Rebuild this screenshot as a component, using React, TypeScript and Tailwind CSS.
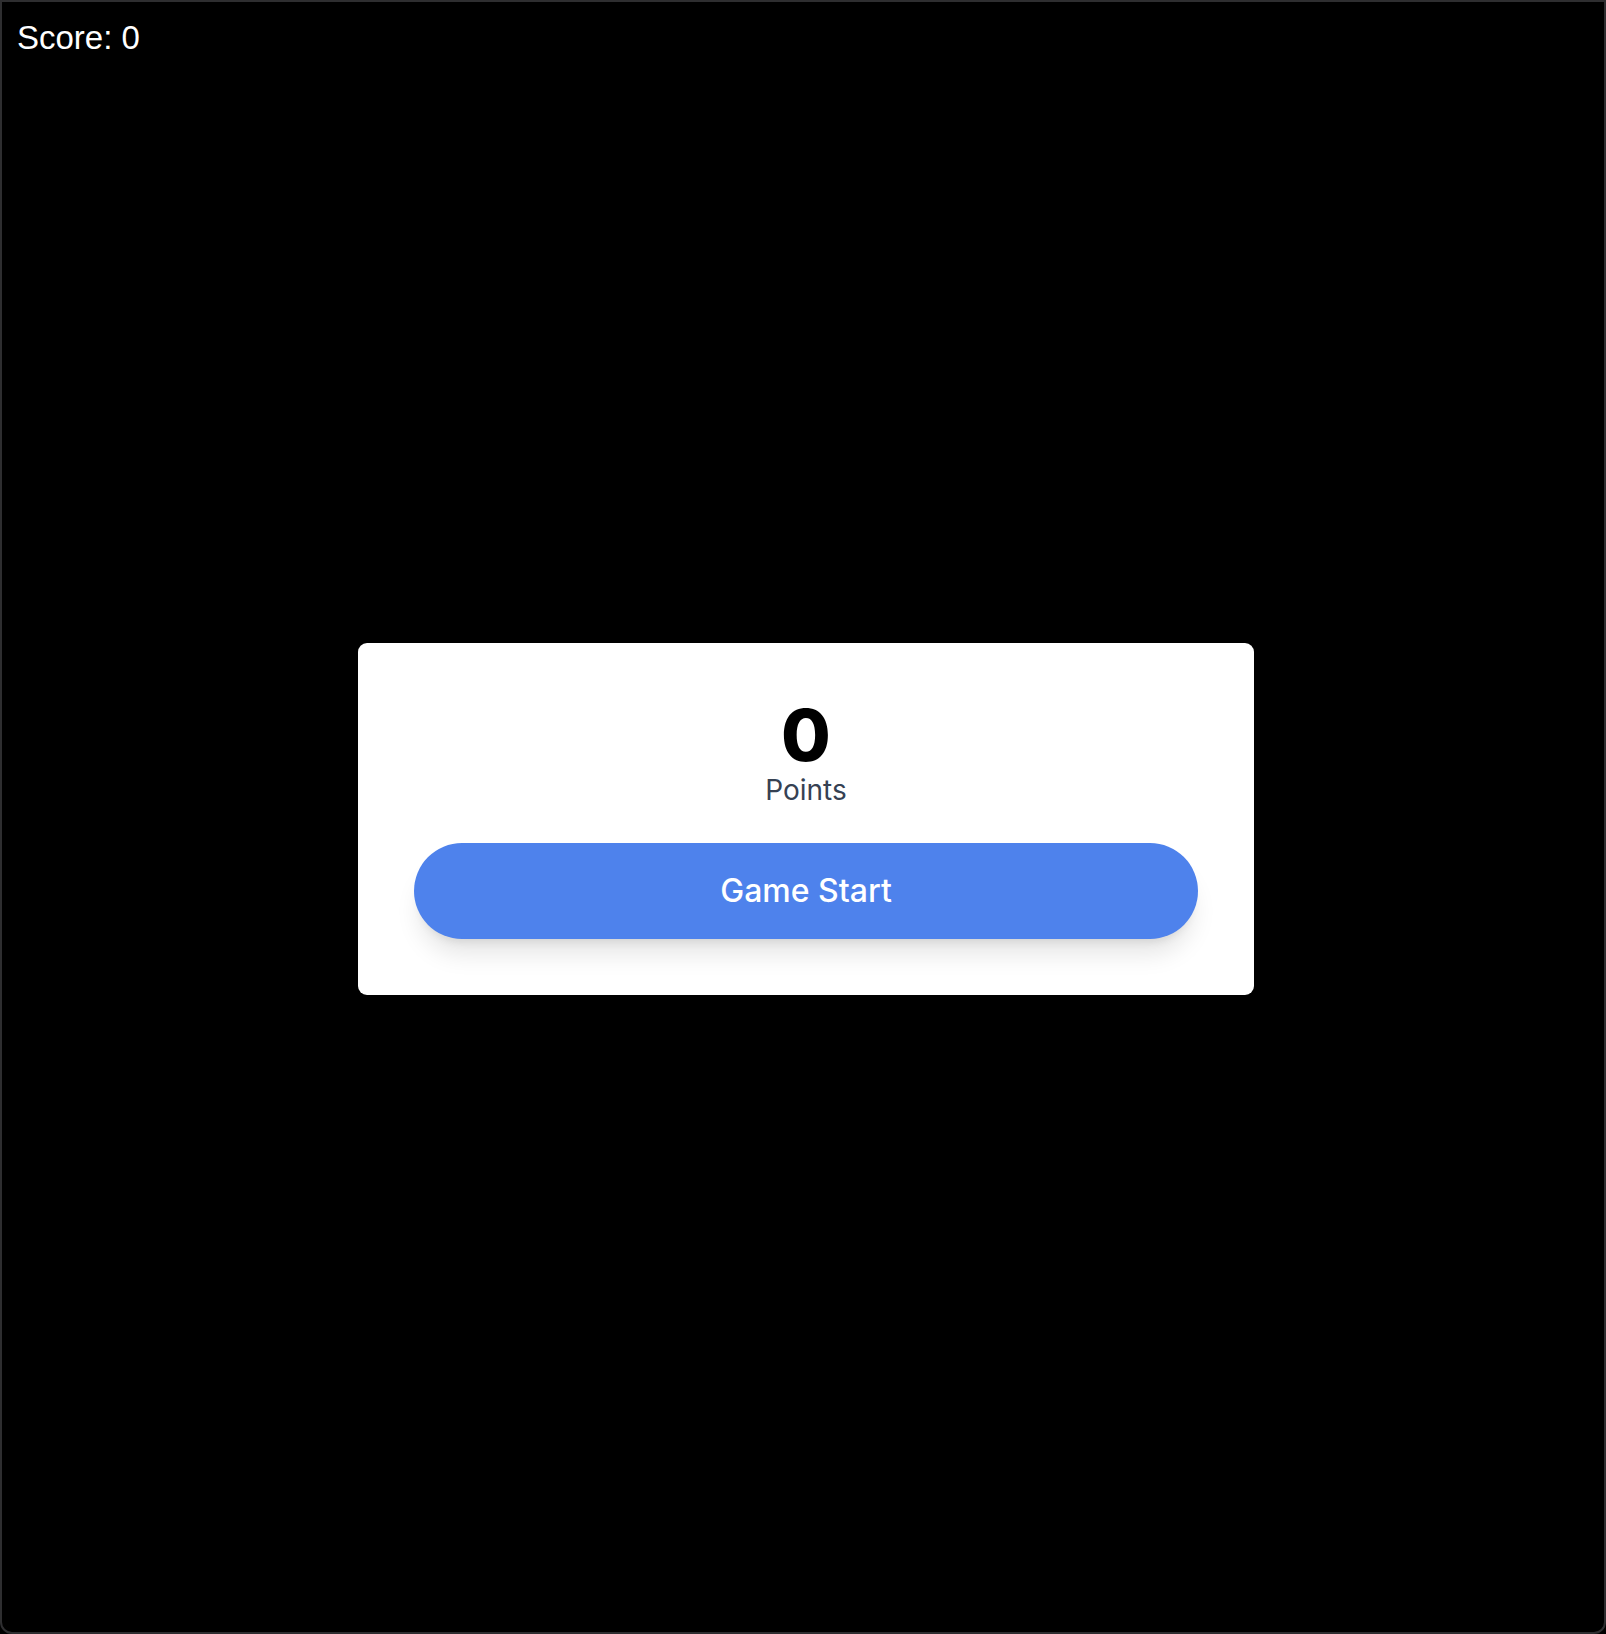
import { useState } from 'react'

export default function App() {
  const [score] = useState(0)

  return (
    <div className="h-[1634px] w-full bg-black overflow-hidden">
      <div
        className="relative h-full w-full bg-black border-2 border-[#2e2e30] rounded-b-[12px] flex items-center justify-center pl-[6px] pt-[4px]"
        style={{ fontFamily: 'Inter, "Noto Sans", sans-serif' }}
      >
        <div
          className="absolute top-[19px] left-[15px] text-white text-[33px] leading-none"
          style={{ fontFamily: '"Liberation Sans", Arial, sans-serif' }}
        >
          Score: {score}
        </div>

        <div className="w-full max-w-4xl bg-white rounded-[9px] p-14 flex flex-col items-center">
          <div className="text-7xl leading-none font-extrabold text-black">{score}</div>
          <div className="mt-[3px] text-[28px] leading-[33px] text-gray-700">Points</div>
          <button className="mt-9 h-24 w-full rounded-full bg-[#4e82ec] text-white text-[32px] font-medium shadow-xl">
            Game Start
          </button>
        </div>
      </div>
    </div>
  )
}
